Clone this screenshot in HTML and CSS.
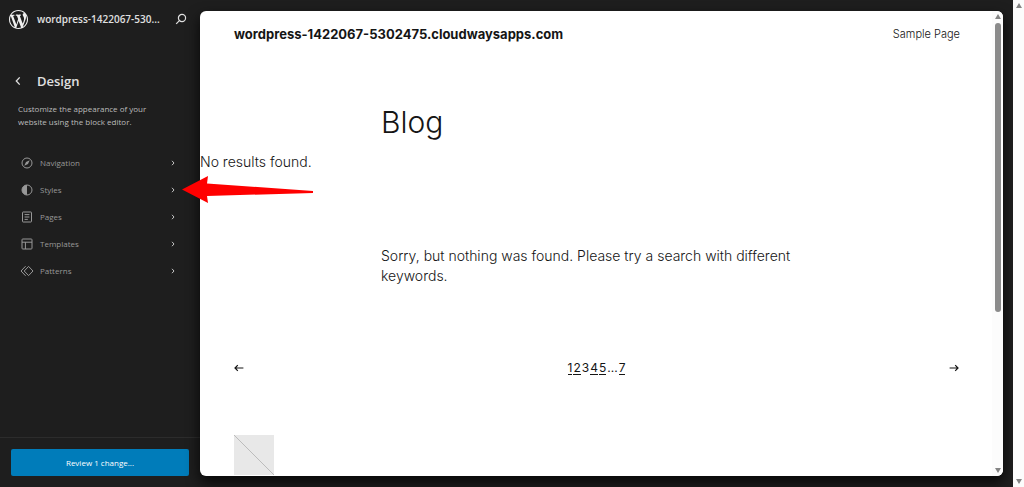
FILE: index.html
```html
<!DOCTYPE html>
<html lang="en">
<head>
<meta charset="utf-8">
<meta name="viewport" content="width=device-width, initial-scale=1">
<title>Design</title>
<link rel="stylesheet" href="styles.css">
</head>
<body>
<div class="editor">
  <aside class="sidebar">
    <header class="hub">
      <a class="hub-logo" href="#" aria-label="Dashboard"><svg viewBox="0 0 20 20"><path d="M20 10c0-5.51-4.49-10-10-10C4.48 0 0 4.49 0 10c0 5.52 4.48 10 10 10 5.51 0 10-4.48 10-10zM7.78 15.37L4.37 6.22c.55-.02 1.17-.08 1.17-.08.5-.06.44-1.13-.06-1.11 0 0-1.45.11-2.37.11-.18 0-.37 0-.58-.01C4.12 2.69 6.87 1.11 10 1.11c2.33 0 4.45.87 6.05 2.34-.68-.11-1.65.39-1.65 1.58 0 .74.45 1.36.9 2.1.35.61.55 1.36.55 2.46 0 1.49-1.4 5-1.4 5l-3.03-8.37c.54-.02.82-.17.82-.17.5-.05.44-1.25-.06-1.22 0 0-1.44.12-2.38.12-.87 0-2.33-.12-2.33-.12-.5-.03-.56 1.2-.06 1.22l.92.08 1.26 3.41zM17.41 10c.24-.64.74-1.87.43-4.25.7 1.29 1.05 2.71 1.05 4.25 0 3.29-1.73 6.24-4.4 7.78.97-2.59 1.94-5.2 2.92-7.78zM6.1 18.09C3.12 16.65 1.11 13.53 1.11 10c0-1.3.23-2.48.72-3.59C3.25 10.3 4.67 14.2 6.1 18.09zm4.03-6.63l2.58 6.98c-.86.29-1.76.45-2.71.45-.79 0-1.57-.11-2.29-.33.81-2.38 1.62-4.74 2.42-7.1z"/></svg></a>
      <a class="hub-title" href="#">wordpress-1422067-530...</a>
      <button class="icon-button" type="button" aria-label="Search"><svg class="icon-search" viewBox="0 0 12 12"><circle cx="7" cy="5" r="3.6"/><path d="M4.4 7.6 1.2 10.8"/></svg></button>
    </header>
    <div class="panel">
      <div class="panel-head">
        <button class="icon-button" type="button" aria-label="Back"><svg class="icon-back" viewBox="0 0 6 10"><path d="M4.7 1.4 1.3 5l3.4 3.6"/></svg></button>
        <h1 class="panel-title">Design</h1>
      </div>
      <p class="panel-text">Customize the appearance of your website using the block editor.</p>
      <nav class="menu">
        <a class="menu-item" href="#"><svg class="menu-icon" viewBox="0 0 14 14"><circle cx="7" cy="7" r="5"/><path class="solid" d="M9.7 4.3 8 8 4.3 9.7 6 6z"/></svg><span>Navigation</span><svg class="chevron" viewBox="0 0 4 6"><path d="m1 .8 2 2.2-2 2.2"/></svg></a>
        <a class="menu-item" href="#"><svg class="menu-icon" viewBox="0 0 14 14"><circle cx="7" cy="7" r="5"/><path class="solid" d="M7 2a5 5 0 0 0 0 10z"/></svg><span>Styles</span><svg class="chevron" viewBox="0 0 4 6"><path d="m1 .8 2 2.2-2 2.2"/></svg></a>
        <a class="menu-item" href="#"><svg class="menu-icon" viewBox="0 0 14 14"><rect x="2.5" y="2" width="9" height="10" rx=".6"/><path d="M4.6 4.6h4.8M4.6 7h4.8M4.6 9.4h3.2"/></svg><span>Pages</span><svg class="chevron" viewBox="0 0 4 6"><path d="m1 .8 2 2.2-2 2.2"/></svg></a>
        <a class="menu-item" href="#"><svg class="menu-icon" viewBox="0 0 14 14"><rect x="2" y="2" width="10" height="10" rx=".8"/><path d="M2 5.2h10M5.4 5.2V12"/></svg><span>Templates</span><svg class="chevron" viewBox="0 0 4 6"><path d="m1 .8 2 2.2-2 2.2"/></svg></a>
        <a class="menu-item" href="#"><svg class="menu-icon" viewBox="0 0 14 14"><path d="M8.6 2.4 13 7l-4.4 4.6L4.2 7zM5.6 2.2 1 7l4.6 4.8"/></svg><span>Patterns</span><svg class="chevron" viewBox="0 0 4 6"><path d="m1 .8 2 2.2-2 2.2"/></svg></a>
      </nav>
    </div>
    <footer class="save"><button class="save-button" type="button">Review 1 change...</button></footer>
  </aside>
  <main class="canvas">
    <div class="site">
      <header class="site-head">
        <a class="site-title" href="#">wordpress-1422067-5302475.cloudwaysapps.com</a>
        <a class="site-link" href="#">Sample Page</a>
      </header>
      <h2 class="site-heading">Blog</h2>
      <p class="site-text">No results found.</p>
      <p class="site-text site-empty">Sorry, but nothing was found. Please try a search with different keywords.</p>
      <nav class="pagination" aria-label="Pagination">
        <a class="page-arrow" href="#" aria-label="Previous page"><svg viewBox="0 0 10 8"><path d="M9.4 4H1M3.8 1.2 1 4l2.8 2.8"/></svg></a>
        <div class="page-numbers"><a href="#">1</a><a href="#">2</a><span>3</span><a href="#">4</a><a href="#">5</a><span>...</span><a href="#">7</a></div>
        <a class="page-arrow" href="#" aria-label="Next page"><svg viewBox="0 0 10 8"><path d="M.6 4H9M6.2 1.2 9 4 6.2 6.8"/></svg></a>
      </nav>
      <svg class="placeholder" viewBox="0 0 40 40"><path d="m0 0 40 40"/></svg>
    </div>
    <div class="scrollbar"><i class="scroll-up"></i><i class="scroll-thumb"></i><i class="scroll-down"></i></div>
  </main>
  <div class="scrollbar window-scrollbar"><i class="scroll-up"></i><i class="scroll-down"></i></div>
  <svg class="pointer" viewBox="0 0 132 28"><path d="M0 13.5 26 0 25 7.5 131 15 131 17 25 20 26 27z"/></svg>
</div>
</body>
</html>
```
FILE: styles.css
```css
* { box-sizing: border-box; }

body {
  margin: 0;
  background: #1e1e1e;
  font-family: "Open Sans", "Noto Sans", sans-serif;
}

a { color: inherit; text-decoration: none; }
h1, h2, p { margin: 0; }
svg { display: block; flex: none; fill: none; stroke: currentColor; }

.editor {
  position: relative;
  display: flex;
  height: 100vh;
  overflow: hidden;
}

.sidebar {
  display: flex;
  flex: none;
  flex-direction: column;
  width: 200px;
  color: #e0e0e0;
}

.hub {
  display: flex;
  align-items: center;
  height: 38px;
  padding: 0 13px 0 9px;
}

.hub-logo svg { width: 19px; fill: #f0f0f0; stroke: none; }

.hub-title {
  flex: 1;
  padding-left: 9px;
  font-size: 10px;
  font-weight: 600;
  white-space: nowrap;
}

.icon-button {
  display: flex;
  padding: 0;
  border: 0;
  background: none;
  color: #e0e0e0;
}

.icon-search { width: 12px; stroke-width: 1.2; }
.icon-back { width: 6px; stroke-width: 1.3; }

.panel { flex: 1; padding: 32px 18px 0 15px; }

.panel-head {
  display: flex;
  align-items: center;
  gap: 16px;
}

.panel-title {
  font-size: 13px;
  font-weight: 600;
  line-height: 22px;
}

.panel-text {
  max-width: 145px;
  margin-top: 10px;
  padding-left: 3px;
  color: #bcbcbc;
  font-size: 8px;
  line-height: 13px;
}

.menu { margin-top: 21px; }

.menu-item {
  display: flex;
  align-items: center;
  gap: 6px;
  height: 27px;
  padding: 0 7px 0 5px;
  color: #989898;
  font-size: 8px;
}

.menu-item span { flex: 1; }
.menu-icon { width: 14px; }
.menu-icon .solid { fill: currentColor; stroke: none; }
.chevron { width: 4px; color: #c4c4c4; }

.save {
  padding: 11px;
  border-top: 1px solid #2c2c2c;
}

.save-button {
  width: 100%;
  height: 27px;
  border: 0;
  border-radius: 2px;
  background: #007cba;
  color: #fff;
  font: 8px "Open Sans", "Noto Sans", sans-serif;
}

.canvas {
  display: flex;
  flex: 1;
  min-width: 0;
  margin: 11px 10px 11px 0;
  overflow: hidden;
  border-radius: 6px;
  background: #fff;
  box-shadow: 0 6px 14px rgba(0, 0, 0, 0.8);
  color: #151515;
  font-family: Inter, "Open Sans", sans-serif;
}

.site { flex: 1; min-width: 0; }

.site-head {
  display: flex;
  align-items: center;
  justify-content: space-between;
  height: 46px;
  padding: 0 32px 0 34px;
}

.site-title { font-size: 13px; font-weight: 700; }
.site-link { font-size: 11px; font-weight: 300; }

.site-heading {
  max-width: 430px;
  margin: 44px auto 0;
  font-size: 30px;
  font-weight: 300;
  line-height: 42px;
}

.site-text {
  margin-top: 9px;
  font-size: 14px;
  font-weight: 300;
  line-height: 20px;
}

.site-empty {
  max-width: 430px;
  margin: 74px auto 0;
}

.pagination {
  display: flex;
  align-items: center;
  justify-content: space-between;
  height: 20px;
  margin: 72px 33px 0 34px;
  font-size: 12px;
  font-weight: 400;
}

.page-arrow svg { width: 10px; stroke-width: 1.2; }
.page-numbers a { border-bottom: 1px solid #151515; }
.page-numbers { display: flex; gap: 1px; line-height: 13px; }

.placeholder {
  width: 40px;
  margin: 57px 0 0 34px;
  background: #e8e8e8;
  color: #bcbcbc;
}

.scrollbar {
  display: flex;
  flex: none;
  flex-direction: column;
  align-items: center;
  width: 11px;
  padding: 3px 0;
  background: #fcfcfc;
}

.scroll-up, .scroll-down {
  border: 3px solid transparent;
  border-top-width: 0;
  border-bottom: 5px solid #858585;
}

.scroll-down {
  margin-top: auto;
  border-top: 5px solid #858585;
  border-bottom-width: 0;
}

.scroll-thumb {
  width: 6px;
  height: 63%;
  margin-top: 4px;
  border-radius: 3px;
  background: #8b8b8b;
}

.pointer {
  position: absolute;
  top: 176px;
  left: 182px;
  width: 132px;
  fill: #f00;
  stroke: none;
}
```
